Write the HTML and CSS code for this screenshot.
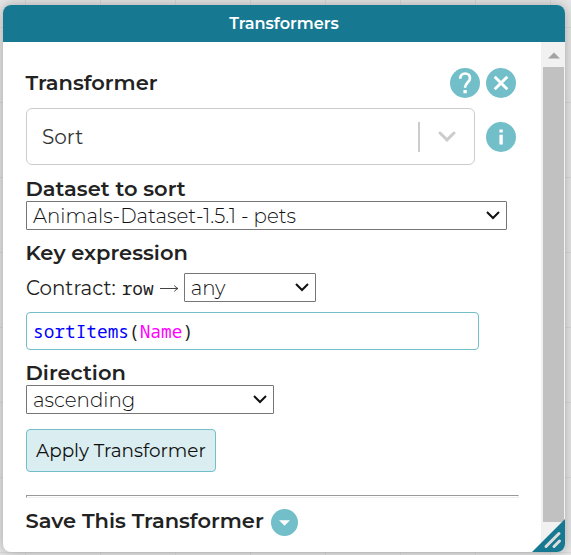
FILE: index.html
```
<!DOCTYPE html>
<html lang="en">
<head>
<meta charset="utf-8">
<title>Transformers</title>
<link rel="stylesheet" href="styles.css">
</head>
<body>
<div class="window">
  <header class="titlebar"><span>Transformers</span></header>
  <div class="body">
    <main class="content">
      <div class="row top">
        <h2>Transformer</h2>
        <svg class="icon" viewBox="0 0 30 30"><circle cx="15" cy="15" r="15" fill="#72bec9"/><path d="M10.200 10.800C10.200 7.400 12.200 5.500 15.100 5.500C18 5.500 20 7.400 20 10.200C20 14.200 15.100 14.500 15.100 19.700" fill="none" stroke="#fff" stroke-width="2.700"/><path d="M13.400 22h3.400v3.300h-3.400z" fill="#fff"/></svg>
        <svg class="icon" viewBox="0 0 30 30"><circle cx="15" cy="15" r="15" fill="#72bec9"/><path d="M8.700 8.700L21.300 21.300M21.300 8.700L8.700 21.300" stroke="#fff" stroke-width="2.900"/></svg>
      </div>
      <div class="row pick">
        <div class="combo"><span>Sort</span><i></i><svg width="18" height="11" viewBox="0 0 18 11"><path d="M2 2L9 8.800L16 2" fill="none" stroke="#ccc" stroke-width="3" stroke-linecap="round"/></svg></div>
        <svg class="icon" viewBox="0 0 30 30"><circle cx="15" cy="15" r="15" fill="#72bec9"/><path d="M13.400 7.500h3.400v3h-3.400zM13.400 12.800h3.400v9.700h-3.400z" fill="#fff"/></svg>
      </div>
      <h2>Dataset to sort</h2>
      <div class="select wide"><span>Animals-Dataset-1.5.1 - pets</span><svg width="14" height="9" viewBox="0 0 14 9"><path d="M1 1L7 7L13 1" fill="none" stroke="#111" stroke-width="2"/></svg></div>
      <h2 class="key">Key expression</h2>
      <div class="row contract">
        <span>Contract:</span><code>row</code><svg class="arrow" width="19" height="10" viewBox="0 0 19 10"><path d="M0 5.500H18M14.500 2.500Q15.500 4.800 18 5.500Q15.500 6.200 14.500 8.500" fill="none" stroke="#444" stroke-width="1"/></svg>
        <div class="select small"><span>any</span><svg width="14" height="9" viewBox="0 0 14 9"><path d="M1 1L7 7L13 1" fill="none" stroke="#111" stroke-width="2"/></svg></div>
      </div>
      <div class="editor"><span class="fn">sortItems</span>(<span class="var">Name</span>)</div>
      <h2>Direction</h2>
      <div class="select mid"><span>ascending</span><svg width="14" height="9" viewBox="0 0 14 9"><path d="M1 1L7 7L13 1" fill="none" stroke="#111" stroke-width="2"/></svg></div>
      <button class="apply"><span>Apply Transformer</span></button>
      <hr>
      <div class="row save">
        <h2>Save This Transformer</h2>
        <svg width="27" height="27" viewBox="0 0 27 27"><circle cx="13.500" cy="13.500" r="13.500" fill="#72bec9"/><path d="M8 11.200h11L13.500 16.800z" fill="#fff"/></svg>
      </div>
    </main>
    <div class="scrollbar"><svg width="12" height="7" viewBox="0 0 12 7"><path d="M0 6.500L6 .5L12 6.500z" fill="#a3a3a3"/></svg><div class="thumb"></div></div>
  </div>
  <svg class="grip" width="33" height="33" viewBox="0 0 33 33"><path d="M33 0V33H0z" fill="#177891"/><path d="M14 27.500L27 14.500M22 27.500L27.500 22" stroke="#ddd" stroke-width="3" stroke-linecap="round"/></svg>
</div>
</body>
</html>
```
FILE: styles.css
```
* { box-sizing: border-box; }
body {
  margin: 0;
  width: 571px;
  height: 555px;
  padding: 5px 6px 3px 3px;
  overflow: hidden;
  background-color: #e8e8e8;
  background-image: linear-gradient(90deg, #dcdcdc 1px, transparent 1px), linear-gradient(#dcdcdc 1px, transparent 1px);
  background-size: 75px 75px;
  background-position: 25px 27px;
  font-family: Montserrat, Inter, "Open Sans", sans-serif;
  font-size: 19.8px;
  color: #222;
}
.window {
  position: relative;
  width: 562px;
  height: 547px;
  border-radius: 8px;
  overflow: hidden;
  background: #fff;
  box-shadow: 0 0 14px rgba(0, 0, 0, .3);
}
.titlebar {
  height: 37px;
  display: flex;
  justify-content: center;
  align-items: center;
  background: #177891;
  color: #fff;
  font-size: 16.1px;
  font-weight: 600;
  line-height: 37px;
}
.body { display: flex; height: 510px; }
.content { width: 538px; padding: 26px 22px 0 23px; }
.row { display: flex; align-items: center; }
h2 {
  margin: 0;
  height: 24px;
  font-size: 21px;
  font-weight: 600;
  line-height: 24px;
  text-indent: -.5px;
  white-space: nowrap;
}
span, code { white-space: nowrap; }
.icon { width: 30px; height: 30px; flex: none; }
.top { width: 490px; height: 30px; gap: 6px; }
.top h2 { margin-right: auto; }
.pick { margin: 10px 0 12px; width: 490px; justify-content: space-between; }
.combo {
  display: flex;
  align-items: center;
  width: 449px;
  height: 57px;
  padding: 0 18px 0 15px;
  border: 1px solid #ccc;
  border-radius: 6px;
  color: #333;
  font-size: 20px;
}
.combo i { width: 2px; height: 30px; margin: 0 18px 0 auto; background: #ccc; }
.select {
  display: flex;
  align-items: center;
  justify-content: space-between;
  height: 29px;
  padding: 0 6px;
  border: 1px solid #767676;
  border-radius: 1px;
  color: #111;
  font-size: 19.8px;
  font-weight: 300;
}
.wide { width: 481px; }
.small { width: 132px; margin-left: 5px; }
.mid { width: 248px; }
.key { margin: 11px 0 8px; }
.contract { height: 29px; }
.contract code { margin-left: 6px; width: 33px; font: 17.8px "Noto Sans Mono", "DejaVu Sans Mono", monospace; }
.arrow { margin-left: 5px; }
.editor {
  width: 453px;
  height: 38px;
  margin: 10px 0 11px;
  padding-left: 6px;
  border: 1px solid #72bec9;
  border-radius: 4px;
  font: 17.8px/37px "Noto Sans Mono", "DejaVu Sans Mono", monospace;
}
.fn { color: #00f; }
.var { color: #f0f; }
.apply {
  display: block;
  width: 190px;
  height: 43px;
  margin: 15px 0 23px;
  padding: 0 0 0 9px;
  border: 1px solid #72bec9;
  border-radius: 4px;
  background: #daedf0;
  color: #111;
  font: inherit;
  font-size: 18.4px;
  text-align: left;
}
hr { margin: 0; border: solid; border-width: 1px; border-color: #999 #eee #eee #999; height: 3px; }
.save { margin-top: 10px; gap: 7px; height: 28px; }
.save svg { margin-top: 1px; }
.save h2 { margin-bottom: 3px; }
.scrollbar {
  width: 24px;
  padding: 10px 1px 0 2px;
  background: #f1f1f1;
  text-align: center;
  line-height: 0;
}
.thumb { height: 455px; margin-top: 8px; background: #c1c1c1; }
.grip { position: absolute; right: 0; bottom: 0; }
```
